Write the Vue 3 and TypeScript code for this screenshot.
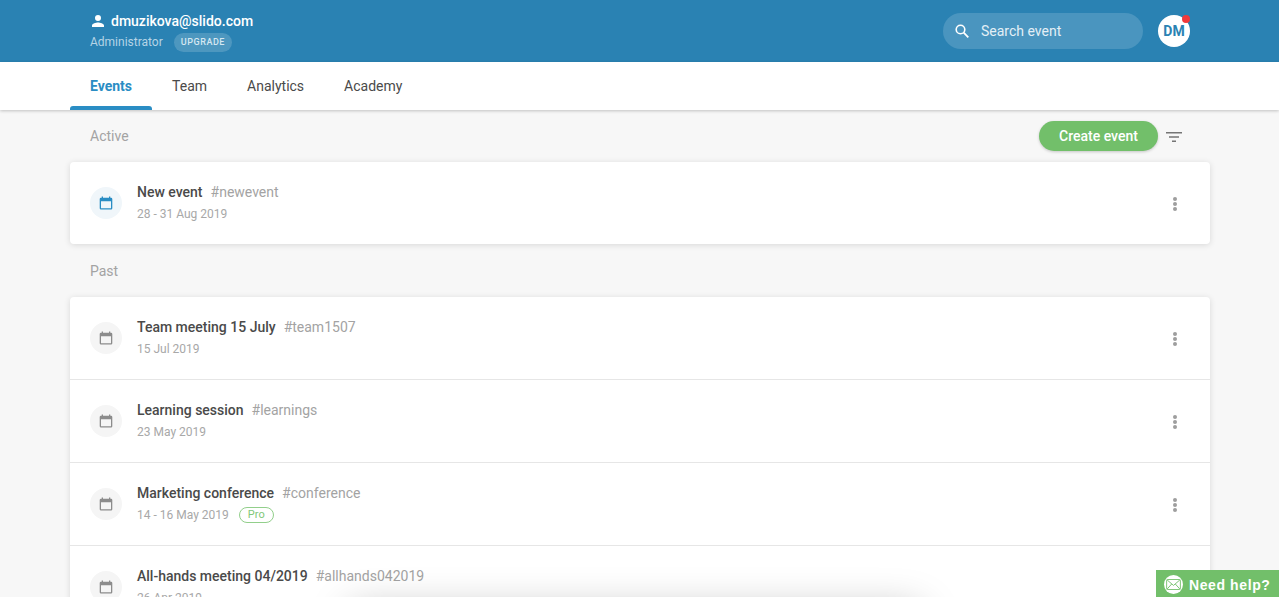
<script setup lang="ts">
interface EventRow {
  name: string
  code: string
  date: string
  pro?: boolean
}

const tabs = ['Events', 'Team', 'Analytics', 'Academy']

const active: EventRow[] = [{ name: 'New event', code: '#newevent', date: '28 - 31 Aug 2019' }]

const past: EventRow[] = [
  { name: 'Team meeting 15 July', code: '#team1507', date: '15 Jul 2019' },
  { name: 'Learning session', code: '#learnings', date: '23 May 2019' },
  { name: 'Marketing conference', code: '#conference', date: '14 - 16 May 2019', pro: true },
  { name: 'All-hands meeting 04/2019', code: '#allhands042019', date: '26 Apr 2019' },
]

const groups = [
  { title: 'Active', rows: active, live: true },
  { title: 'Past', rows: past, live: false },
]
</script>

<template>
  <div class="page">
    <header class="top">
      <div class="account">
        <div class="account__mail">
          <svg class="account__icon" viewBox="0 0 24 24" width="18" height="18">
            <path fill="#fff" d="M12 12a4 4 0 1 0 0-8 4 4 0 0 0 0 8zm0 2c-2.7 0-8 1.3-8 4v2h16v-2c0-2.7-5.300-4-8-4z" />
          </svg>
          dmuzikova@slido.com
        </div>
        <div class="account__role">
          Administrator
          <span class="upgrade">UPGRADE</span>
        </div>
      </div>
      <div class="search">
        <svg viewBox="0 0 18 18" width="18" height="18" fill="none" stroke="#fff">
          <circle cx="7.500" cy="7.500" r="4.300" stroke-width="1.600" />
          <path d="M10.700 10.700l4.600 4.600" stroke-width="1.800" />
        </svg>
        <span>Search event</span>
      </div>
      <div class="avatar">DM<i class="avatar__dot" /></div>
    </header>

    <nav class="tabs">
      <a v-for="(tab, i) in tabs" :key="tab" class="tab" :class="{ 'tab--on': i === 0 }">{{ tab }}</a>
    </nav>

    <main class="content">
      <section v-for="group in groups" :key="group.title">
        <div class="group-head">
          <span class="group-head__title">{{ group.title }}</span>
          <template v-if="group.live">
            <button class="create">Create event</button>
            <svg class="filter" viewBox="0 0 16 12" width="16" height="12">
              <path fill="#757575" d="M0 1h16v1.400H0zM3 5.300h10v1.400H3zM6 9.600h4V11H6z" />
            </svg>
          </template>
        </div>
        <div class="card">
          <div v-for="row in group.rows" :key="row.code" class="row">
            <div class="cal" :class="{ 'cal--live': group.live }">
              <svg viewBox="0 0 14 14" width="14" height="14">
                <path
                  fill="currentColor"
                  d="M12 1.700h-.7V.5H10v1.200H4V.5H2.700v1.200H2A1.300 1.300 0 0 0 .7 3v9.300A1.300 1.300 0 0 0 2 13.600h10a1.300 1.300 0 0 0 1.300-1.300V3A1.300 1.300 0 0 0 12 1.700zm0 10.600H2V5.300h10z"
                />
              </svg>
            </div>
            <div class="info">
              <div class="info__top">
                <span class="info__name">{{ row.name }}</span>
                <span class="info__code">{{ row.code }}</span>
              </div>
              <div class="info__date">
                {{ row.date }}
                <span v-if="row.pro" class="pro">Pro</span>
              </div>
            </div>
            <div class="more"><i /><i /><i /></div>
          </div>
        </div>
      </section>
    </main>

    <div class="fold-shadow" />

    <div class="help">
      <span class="help__badge">
        <svg viewBox="0 0 16 12" width="15" height="11">
          <rect x="0.5" y="0.5" width="15" height="11" rx="1" fill="none" stroke="#72bf6a" />
          <path d="M1 1l7 6 7-6M1 11l5-5.500M15 11l-5-5.500" fill="none" stroke="#72bf6a" />
        </svg>
      </span>
      Need help?
    </div>
  </div>
</template>

<style>
html,
body {
  margin: 0;
  background: #f7f7f7;
}
</style>

<style scoped>
.page {
  height: 597px;
  overflow: hidden;
  position: relative;
  background: #f7f7f7;
  font-family: Roboto, "Liberation Sans", sans-serif;
  font-size: 14px;
  color: #4a4a4a;
}

.top {
  height: 62px;
  box-sizing: border-box;
  background: #2a82b3;
  padding: 0 89px 0 90px;
  display: flex;
  align-items: center;
  color: #fff;
}

.account {
  flex: 1;
}

.account__mail {
  display: flex;
  align-items: center;
  font-size: 14px;
  font-weight: 500;
  height: 20px;
}

.account__icon {
  margin: 0 4px 0 -1px;
}

.account__role {
  display: flex;
  align-items: center;
  margin-top: 2px;
  font-size: 12px;
  color: #b5d4e6;
}

.upgrade {
  margin-left: 11px;
  height: 19px;
  line-height: 19px;
  padding: 0 7px;
  border-radius: 10px;
  background: rgba(255, 255, 255, 0.17);
  color: #d6e7f1;
  font-size: 9px;
  font-weight: 500;
  letter-spacing: 0.55px;
}

.search {
  width: 200px;
  height: 36px;
  box-sizing: border-box;
  padding-left: 10px;
  border-radius: 18px;
  background: #4a95bf;
  display: flex;
  align-items: center;
  gap: 10px;
  font-size: 14px;
  color: #e3eff6;
}

.avatar {
  position: relative;
  width: 32px;
  height: 32px;
  margin-left: 15px;
  border-radius: 50%;
  background: #fff;
  color: #2a82b3;
  font-size: 14px;
  font-weight: 700;
  line-height: 32px;
  text-align: center;
}

.avatar__dot {
  position: absolute;
  top: 0;
  right: 0;
  width: 8px;
  height: 8px;
  border-radius: 50%;
  background: #f0393b;
}

.tabs {
  height: 48px;
  background: #fff;
  padding: 0 70px;
  display: flex;
  position: relative;
  box-shadow: 0 1px 3px rgba(0, 0, 0, 0.22);
}

.tab {
  padding: 0 20px;
  line-height: 48px;
  position: relative;
}

.tab--on {
  color: #2a8dc4;
  font-weight: 700;
}

.tab--on::after {
  content: '';
  position: absolute;
  left: 0;
  right: 0;
  bottom: 0;
  height: 4px;
  background: #2a8dc4;
  border-radius: 3px 3px 0 0;
}

.content {
  width: 1140px;
  margin-left: 70px;
}

.group-head {
  height: 52px;
  padding: 0 28px 0 20px;
  display: flex;
  align-items: center;
}

section + section .group-head {
  height: 53px;
}

.group-head__title {
  flex: 1;
  color: #a3a3a3;
  font-size: 14px;
}

.create {
  height: 30px;
  width: 119px;
  border: none;
  border-radius: 15px;
  background: #72bf6a;
  color: #fff;
  font-family: inherit;
  font-size: 14px;
  font-weight: 500;
  box-shadow: 0 1px 3px rgba(0, 0, 0, 0.2);
  margin-top: -1px;
}

.filter {
  margin-left: 8px;
  margin-top: 1px;
}

.card {
  background: #fff;
  border-radius: 4px;
  box-shadow: 0 1px 6px rgba(0, 0, 0, 0.13);
}

.row {
  height: 82px;
  padding: 0 33px 0 20px;
  display: flex;
  align-items: center;
}

.row + .row {
  border-top: 1px solid #e6e6e6;
}

.cal {
  width: 32px;
  height: 32px;
  border-radius: 50%;
  background: #f5f5f5;
  color: #8c8c8c;
  display: flex;
  align-items: center;
  justify-content: center;
}

.cal--live {
  background: #f0f6fa;
  color: #2a8dc4;
}

.info {
  flex: 1;
  margin-left: 15px;
}

.info__top {
  display: flex;
  gap: 8px;
  line-height: 20px;
  margin-top: -1px;
}

.info__name {
  font-weight: 500;
  color: #4a4a4a;
}

.info__code {
  color: #a3a3a3;
}

.info__date {
  margin-top: 3px;
  height: 18px;
  display: flex;
  align-items: center;
  font-size: 12px;
  color: #a8a8a8;
}

.pro {
  margin-left: 10px;
  width: 35px;
  height: 16px;
  box-sizing: border-box;
  border: 1px solid #92cf8b;
  border-radius: 8px;
  color: #82c87a;
  font-size: 11px;
  line-height: 14px;
  text-align: center;
}

.more {
  width: 4px;
  margin-top: 1px;
  display: flex;
  flex-direction: column;
  gap: 1px;
}

.more i {
  width: 4px;
  height: 4px;
  border-radius: 50%;
  background: #9e9e9e;
}

.fold-shadow {
  position: absolute;
  left: 350px;
  top: 610px;
  width: 570px;
  height: 60px;
  box-shadow: 0 0 40px rgba(0, 0, 0, 0.28);
}

.help {
  position: absolute;
  right: 0;
  bottom: 0;
  width: 123px;
  height: 27px;
  box-sizing: border-box;
  padding: 2px 0 0 8px;
  background: #72bf6a;
  color: #fff;
  display: flex;
  align-items: center;
  gap: 6px;
  font-family: "Liberation Sans", Arial, sans-serif;
  font-size: 14px;
  font-weight: 700;
  letter-spacing: 0.6px;
  white-space: nowrap;
}

.help__badge {
  width: 19px;
  height: 19px;
  border-radius: 50%;
  background: #fff;
  display: flex;
  align-items: center;
  justify-content: center;
  flex: none;
}
</style>
